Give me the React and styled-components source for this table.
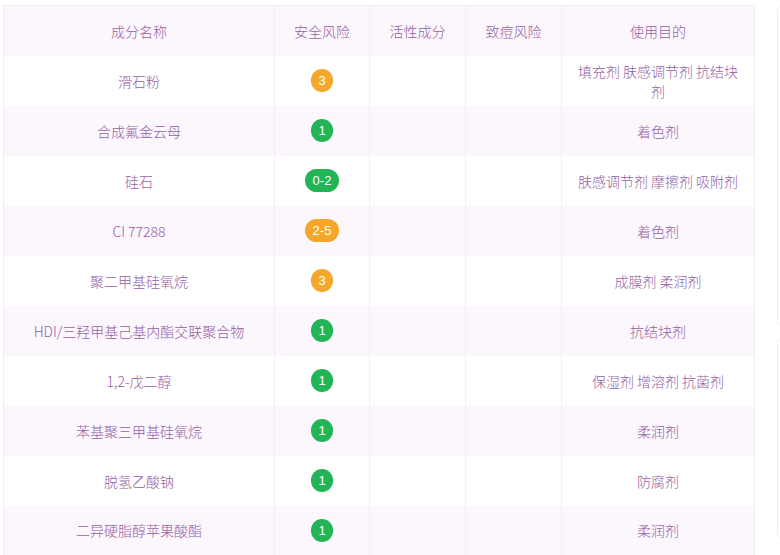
import React from "react";
import styled, { createGlobalStyle } from "styled-components";

const GlobalStyle = createGlobalStyle`
  html, body {
    margin: 0;
    padding: 0;
    background: #ffffff;
    font-family: "Noto Sans CJK SC", "Noto Sans", "Liberation Sans", sans-serif;
  }
`;

const Page = styled.div`
  display: flex;
  align-items: flex-start;
  gap: 22px;
  padding: 5px 0 0 3px;
  width: 780px;
  height: 555px;
  box-sizing: border-box;
  overflow: hidden;
`;

const Table = styled.table`
  width: 751px;
  flex-shrink: 0;
  border-collapse: collapse;
  table-layout: fixed;
  border: 1px solid #f1edf3;
  font-size: 14px;
  font-weight: 300;
  color: #9361a5;
`;

const Row = styled.tr`
  height: 50px;
  background: ${(p) => (p.$striped ? "#fcf6fd" : "#ffffff")};
`;

const HeadCell = styled.th`
  font-weight: 300;
  text-align: center;
  border-right: 1px solid #f3eff5;
  padding: 0 10px;
  line-height: 20px;
  &:last-child { border-right: none; }
`;

const Cell = styled.td`
  text-align: center;
  border-right: 1px solid #f3eff5;
  padding: 5px 10px;
  line-height: 20px;
  &:last-child { border-right: none; }
`;

const Badge = styled.span`
  display: inline-flex;
  align-items: center;
  justify-content: center;
  min-width: 22px;
  height: 23px;
  padding: 0 ${(p) => (p.$wide ? "8px" : "0")};
  box-sizing: border-box;
  border-radius: 12px;
  background: ${(p) => (p.$tone === "warn" ? "#f5a72c" : "#22b557")};
  color: #ffffff;
  font-family: "Liberation Sans", "Noto Sans", sans-serif;
  font-size: 13px;
  vertical-align: middle;
`;

const Aside = styled.div`
  display: flex;
  flex-direction: column;
  gap: 10px;
`;

const SideCard = styled.div`
  width: 40px;
  height: ${(p) => p.$h}px;
  border: 1px solid #f0eef1;
  border-radius: 6px;
`;

const rows = [
  { name: "滑石粉", risk: "3", tone: "warn", use: "填充剂 肤感调节剂 抗结块剂" },
  { name: "合成氟金云母", risk: "1", tone: "ok", use: "着色剂" },
  { name: "硅石", risk: "0-2", tone: "ok", use: "肤感调节剂 摩擦剂 吸附剂" },
  { name: "CI 77288", risk: "2-5", tone: "warn", use: "着色剂" },
  { name: "聚二甲基硅氧烷", risk: "3", tone: "warn", use: "成膜剂 柔润剂" },
  { name: "HDI/三羟甲基己基内酯交联聚合物", risk: "1", tone: "ok", use: "抗结块剂" },
  { name: "1,2-戊二醇", risk: "1", tone: "ok", use: "保湿剂 增溶剂 抗菌剂" },
  { name: "苯基聚三甲基硅氧烷", risk: "1", tone: "ok", use: "柔润剂" },
  { name: "脱氢乙酸钠", risk: "1", tone: "ok", use: "防腐剂" },
  { name: "二异硬脂醇苹果酸酯", risk: "1", tone: "ok", use: "柔润剂" },
];

const App = () => {
  return (
    <>
      <GlobalStyle />
      <Page>
        <Table>
          <colgroup>
            <col style={{ width: 271 }} />
            <col style={{ width: 95 }} />
            <col style={{ width: 96 }} />
            <col style={{ width: 96 }} />
            <col style={{ width: 193 }} />
          </colgroup>
          <thead>
            <Row $striped>
              <HeadCell>成分名称</HeadCell>
              <HeadCell>安全风险</HeadCell>
              <HeadCell>活性成分</HeadCell>
              <HeadCell>致痘风险</HeadCell>
              <HeadCell>使用目的</HeadCell>
            </Row>
          </thead>
          <tbody>
            {rows.map((r, i) => (
              <Row key={r.name} $striped={i % 2 === 1}>
                <Cell>{r.name}</Cell>
                <Cell>
                  <Badge $tone={r.tone} $wide={r.risk.length > 1}>
                    {r.risk}
                  </Badge>
                </Cell>
                <Cell />
                <Cell />
                <Cell>{r.use}</Cell>
              </Row>
            ))}
          </tbody>
        </Table>
        <Aside>
          <SideCard $h={320} />
          <SideCard $h={200} />
        </Aside>
      </Page>
    </>
  );
};

export default App;
